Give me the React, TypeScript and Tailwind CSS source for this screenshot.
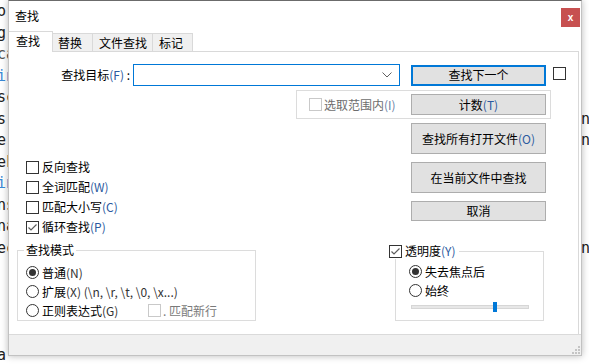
import React from "react";

const FONT = "font-['Noto_Sans_CJK_SC','Noto_Sans',sans-serif]";

function Box({ checked = false, disabled = false }: { checked?: boolean; disabled?: boolean }) {
  return (
    <span
      className={`inline-flex w-[13px] h-[13px] shrink-0 items-center justify-center border bg-white ${
        disabled ? "border-[#c9c9c9]" : "border-[#333333]"
      }`}
    >
      {checked && (
        <svg width="11" height="11" viewBox="0 0 11 11">
          <polyline points="1.5,5.5 4,8 9.5,2.5" fill="none" stroke="#5c5c5c" strokeWidth="1.2" />
        </svg>
      )}
    </span>
  );
}

function Radio({ checked = false }: { checked?: boolean }) {
  return (
    <span className="inline-flex w-[13px] h-[13px] shrink-0 items-center justify-center rounded-full border border-[#333333] bg-white">
      {checked && <span className="block w-[7px] h-[7px] rounded-full bg-[#333333]" />}
    </span>
  );
}

function Acc({ children, gray = false }: { children: React.ReactNode; gray?: boolean }) {
  return <span className={gray ? "text-[#6d82a6]" : "text-[#2c5aa0]"}>{children}</span>;
}

function Btn({
  children,
  h,
  primary = false,
}: {
  children: React.ReactNode;
  h: string;
  primary?: boolean;
}) {
  return (
    <div
      className={`flex w-[135px] items-center justify-center bg-[#e1e1e1] text-[12px] leading-[16px] text-black ${h} ${
        primary ? "border-2 border-[#0078d7]" : "border border-[#adadad]"
      }`}
    >
      {children}
    </div>
  );
}

const leftFrags: { t: string; c: string }[] = [
  { t: "or", c: "text-[#222]" },
  { t: "g", c: "text-[#222]" },
  { t: "ca", c: "text-[#555]" },
  { t: "in", c: "text-[#3b8ad6]" },
  { t: "sc", c: "text-[#222]" },
  { t: "s", c: "text-[#222]" },
  { t: "e", c: "text-[#222]" },
  { t: "ek", c: "text-[#222]" },
  { t: "in", c: "text-[#3b8ad6]" },
  { t: "ns", c: "text-[#222]" },
  { t: "na", c: "text-[#222]" },
  { t: "ec", c: "text-[#222]" },
  { t: "", c: "" },
  { t: "", c: "" },
  { t: "", c: "" },
  { t: "", c: "" },
  { t: "a", c: "text-[#222]" },
];

const rightFrags: string[] = ["", "", "", "", "", "ne", "n.", "", "", "", "", "na"];

export default function App() {
  return (
    <div className={`relative w-[589px] h-[364px] overflow-hidden bg-white ${FONT}`}>
      {/* editor behind the dialog */}
      <div className="flex h-full justify-between font-['DejaVu_Sans_Mono',monospace] text-[15px] leading-[21.5px]">
        <div className="w-[8px] overflow-hidden pt-[1px]">
          {leftFrags.map((f, i) => (
            <div key={i} className={`h-[21.5px] whitespace-nowrap -ml-[3px] ${f.c}`}>
              {f.t}
            </div>
          ))}
        </div>
        <div className="w-[8px] overflow-hidden pt-[1px]">
          {rightFrags.map((f, i) => (
            <div key={i} className="h-[21.5px] whitespace-nowrap text-[#222]">
              {f}
            </div>
          ))}
        </div>
      </div>

      {/* dialog window */}
      <div className="absolute left-[8px] top-0 flex w-[574px] h-[356px] flex-col border-x border-b border-t border-x-[#c2c2c2] border-b-[#c2c2c2] border-t-[#6b6b6b] bg-white shadow-[0_0_7px_rgba(0,0,0,0.28)] text-[12px] leading-[16px] text-black">
        {/* title bar */}
        <div className="flex h-[30px] shrink-0 items-start justify-between">
          <span className="ml-[6px] mt-[7px] text-[12px] leading-[16px]">查找</span>
          <div className="mr-[1px] mt-[7px] flex w-[19px] h-[19px] items-center justify-center bg-[#c75050] text-[10px] font-bold leading-none text-white font-['Liberation_Sans',sans-serif]">
            x
          </div>
        </div>

        {/* tabs */}
        <div className="flex h-[20px] shrink-0 items-end">
          <div className="relative z-10 -mb-px flex w-[44px] h-[21px] items-start border-r border-t border-[#d9d9d9] bg-white pl-[7px] pt-[1px]">
            查找
          </div>
          <div className="flex w-[40px] h-[18px] items-center border-r border-t border-[#d9d9d9] bg-[#f0f0f0] pl-[5px]">
            替换
          </div>
          <div className="flex w-[60px] h-[18px] items-center border-r border-t border-[#d9d9d9] bg-[#f0f0f0] pl-[6px]">
            文件查找
          </div>
          <div className="flex w-[40px] h-[18px] items-center border-r border-t border-[#d9d9d9] bg-[#f0f0f0] pl-[6px]">
            标记
          </div>
        </div>

        {/* panel */}
        <div className="mr-[2px] flex h-[283px] shrink-0 flex-col border-r border-t border-[#d9d9d9] bg-white">
          {/* row 1 */}
          <div className="mt-[12px] flex h-[22px] items-center">
            <div className="w-[121px] text-right">
              查找目标<Acc>(F)</Acc> :
            </div>
            <div className="ml-[3px] flex w-[267px] h-[22px] items-center justify-end border border-[#0078d7] bg-white pr-[7px]">
              <svg width="10" height="6" viewBox="0 0 10 6">
                <polyline points="0.5,0.5 5,5 9.5,0.5" fill="none" stroke="#606060" strokeWidth="1" />
              </svg>
            </div>
            <div className="ml-[11px]">
              <Btn h="h-[21px]" primary>
                查找下一个
              </Btn>
            </div>
            <div className="ml-[7px]">
              <Box />
            </div>
          </div>

          {/* row 2 */}
          <div className="mt-[4px] ml-[287px] flex w-[255px] h-[29px] items-center border border-[#dcdcdc]">
            <div className="ml-[12px] flex items-center gap-[2px] text-[#6d6d6d]">
              <Box disabled />
              <span>
                选取范围内<Acc gray>(I)</Acc>
              </span>
            </div>
            <div className="ml-auto mr-[4px]">
              <Btn h="h-[21px]">
                计数<Acc>(T)</Acc>
              </Btn>
            </div>
          </div>

          {/* middle */}
          <div className="flex h-[123px]">
            <div className="pl-[17px] pt-[38px]">
              {[
                { l: "反向查找", a: "", c: false },
                { l: "全词匹配", a: "(W)", c: false },
                { l: "匹配大小写", a: "(C)", c: false },
                { l: "循环查找", a: "(P)", c: true },
              ].map((r, i) => (
                <div key={i} className="flex h-[20px] items-center gap-[3px]">
                  <Box checked={r.c} />
                  <span>
                    {r.l}
                    {r.a && <Acc>{r.a}</Acc>}
                  </span>
                </div>
              ))}
            </div>
            <div className="ml-auto mr-[32px] flex flex-col gap-[8px] pt-[4px]">
              <Btn h="h-[31px]">
                查找所有打开文件<Acc>(O)</Acc>
              </Btn>
              <Btn h="h-[31px]">在当前文件中查找</Btn>
              <Btn h="h-[20px]">取消</Btn>
            </div>
          </div>

          {/* bottom groups */}
          <div className="flex items-start">
            <fieldset className="ml-[8px] w-[239px] border border-[#dcdcdc]">
              <legend className="ml-[6px] px-[2px] leading-[16px]">查找模式</legend>
              <div className="pl-[8px] pt-[5px]">
                <div className="flex h-[19px] items-center gap-[3px]">
                  <Radio checked />
                  <span>
                    普通<span className="text-[#333]">(N)</span>
                  </span>
                </div>
                <div className="flex h-[19px] items-center gap-[3px]">
                  <Radio />
                  <span>
                    扩展<span className="text-[#333]">(X) (\n, \r, \t, \0, \x...)</span>
                  </span>
                </div>
                <div className="flex h-[19px] items-center">
                  <Radio />
                  <span className="ml-[3px] w-[106px]">
                    正则表达式<span className="text-[#333]">(G)</span>
                  </span>
                  <Box disabled />
                  <span className="ml-[2px] text-[#7a7a7a]">. 匹配新行</span>
                </div>
              </div>
            </fieldset>

            <div className="relative ml-[139px] mt-[9px] w-[149px] h-[70px] border border-[#dcdcdc]">
              <div className="absolute -left-[7px] -top-[9px] flex h-[16px] items-center gap-[3px] bg-white pr-[3px]">
                <Box checked />
                <span>
                  透明度<Acc>(Y)</Acc>
                </span>
              </div>
              <div className="pl-[13px] pt-[10px]">
                <div className="flex h-[19px] items-center gap-[3px]">
                  <Radio checked />
                  <span>失去焦点后</span>
                </div>
                <div className="flex h-[19px] items-center gap-[3px]">
                  <Radio />
                  <span>始终</span>
                </div>
              </div>
              <div className="relative ml-[15px] mt-[2px] flex w-[118px] h-[10px] items-center">
                <div className="h-[4px] w-full border border-[#d6d6d6] bg-[#e7e7e7]" />
                <div className="absolute left-[82px] top-0 h-[10px] w-[4px] bg-[#0078d7]" />
              </div>
            </div>
          </div>
        </div>

        {/* bottom gray bar */}
        <div className="flex flex-1 items-end justify-end border-t border-[#dadada] bg-[#f0f0f0] pb-[1px] pr-[1px]">
          <svg width="8" height="8" viewBox="0 0 8 8">
            <rect x="6" y="0" width="2" height="2" fill="#c4c4c4" />
            <rect x="3" y="3" width="2" height="2" fill="#c4c4c4" />
            <rect x="6" y="3" width="2" height="2" fill="#c4c4c4" />
            <rect x="0" y="6" width="2" height="2" fill="#c4c4c4" />
            <rect x="3" y="6" width="2" height="2" fill="#c4c4c4" />
            <rect x="6" y="6" width="2" height="2" fill="#c4c4c4" />
          </svg>
        </div>
      </div>
    </div>
  );
}
